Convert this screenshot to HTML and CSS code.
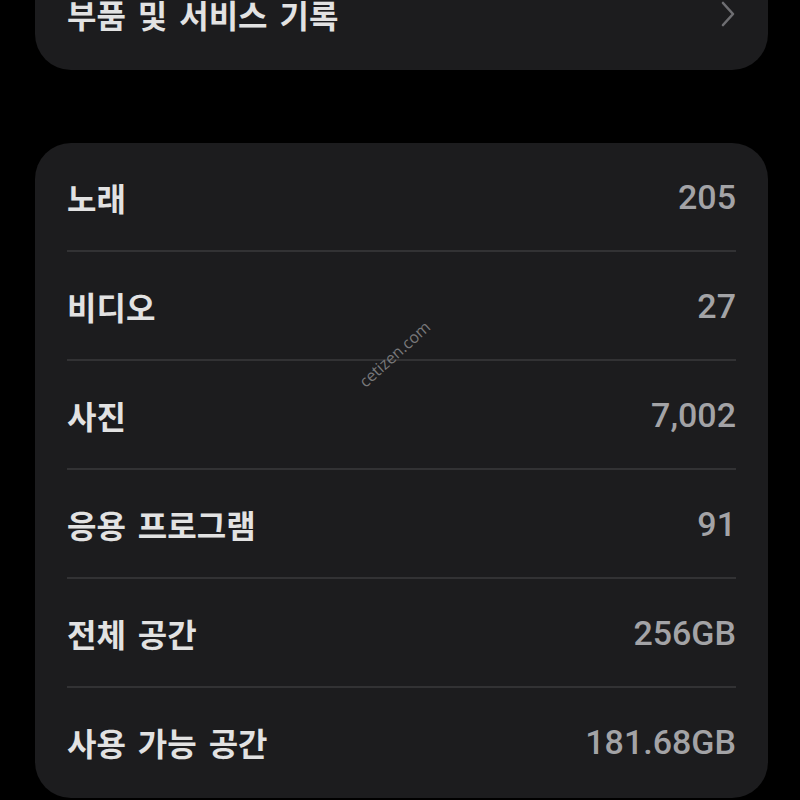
FILE: index.html
```html
<!DOCTYPE html>
<html lang="ko">
<head>
<meta charset="utf-8">
<link rel="stylesheet" href="styles.css">
</head>
<body>
<div class="page">
  <div class="card card-top">
    <div class="row">
      <span class="label">부품 및 서비스 기록</span>
      <svg class="chevron" width="16" height="26" viewBox="0 0 16 26"><path d="M3 2 L13 13 L3 24" fill="none" stroke="#6e6e72" stroke-width="2.6" stroke-linecap="round" stroke-linejoin="round"/></svg>
    </div>
  </div>
  <div class="card card-list">
    <div class="row"><span class="label">노래</span><span class="value">205</span></div>
    <div class="divider"></div>
    <div class="row"><span class="label">비디오</span><span class="value">27</span></div>
    <div class="divider"></div>
    <div class="row"><span class="label">사진</span><span class="value">7,002</span></div>
    <div class="divider"></div>
    <div class="row"><span class="label">응용 프로그램</span><span class="value">91</span></div>
    <div class="divider"></div>
    <div class="row"><span class="label">전체 공간</span><span class="value">256GB</span></div>
    <div class="divider"></div>
    <div class="row"><span class="label">사용 가능 공간</span><span class="value">181.68GB</span></div>
    <div class="watermark">cetizen.com</div>
  </div>
</div>
</body>
</html>
```

FILE: styles.css
```css
html, body {
  margin: 0;
  padding: 0;
  background: #000;
  overflow: hidden;
}
.page {
  width: 800px;
  height: 800px;
  padding: 0 32px 0 35px;
  box-sizing: border-box;
  display: flex;
  flex-direction: column;
}
.card {
  background: #1c1c1e;
  border-radius: 36px;
  position: relative;
}
.card-top {
  margin-top: -42px;
  padding: 0 32px;
}
.card-list {
  margin-top: 73px;
  padding: 0 32px 3px;
}
.row {
  height: 107px;
  display: flex;
  align-items: center;
  justify-content: space-between;
}
.card-top .row {
  height: 112px;
}
.label {
  font-family: "Noto Sans CJK KR", sans-serif;
  font-weight: 700;
  font-size: 32px;
  color: #e2e2e2;
  letter-spacing: 0;
  word-spacing: 3px;
}
.value {
  font-family: Roboto, "Noto Sans", sans-serif;
  font-weight: 500;
  font-size: 34px;
  color: #a3a3a6;
  letter-spacing: 0;
}
.divider {
  height: 2px;
  background: #323234;
}
.watermark {
  position: absolute;
  left: 315px;
  top: 200px;
  font-family: "Open Sans", sans-serif;
  font-size: 16px;
  color: #78787a;
  transform: rotate(-42deg);
  transform-origin: center;
}
```
